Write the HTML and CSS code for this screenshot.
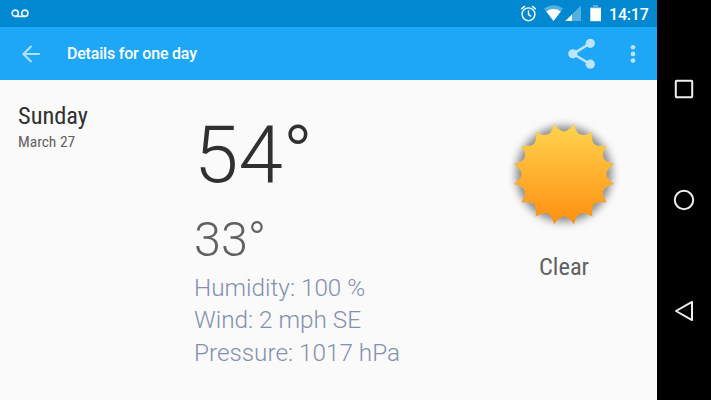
FILE: index.html
```html
<!DOCTYPE html>
<html lang="en">
<head>
<meta charset="utf-8">
<title>Details for one day</title>
<link rel="stylesheet" href="styles.css">
</head>
<body>
<div class="device">
  <div class="app">
    <div class="status">
      <svg class="voicemail" width="18" height="9" viewBox="0 0 18 9" fill="none" stroke="#e4f3fb" stroke-width="1.7"><circle cx="4.2" cy="4.2" r="3.1"/><circle cx="13.8" cy="4.2" r="3.1"/><path d="M4 7.4H14"/></svg>
      <svg class="indicators" width="86" height="20" viewBox="0 0 86 20">
        <g fill="none" stroke="#fff" stroke-width="1.4"><circle cx="8.5" cy="11.3" r="6.4"/><path d="M8.5 7.3V11.7L11.2 13.3M1.2 6.1L4.8 3.1M15.8 6.1L12.2 3.1"/></g>
        <path d="M24 5.5Q33.5-1.2 43 5.5L33.5 18Z" fill="#55b0e0"/>
        <path d="M26.3 8.5Q33.5 3.7 40.8 8.5L33.5 18Z" fill="#fff"/>
        <path d="M45.3 18L61 2.4V18Z" fill="#55b0e0"/>
        <path d="M45.3 18L52 11.4V18Z" fill="#fff"/>
        <path d="M73 2H78V4H81V6H70.3V4H73Z" fill="#55b0e0"/>
        <path d="M70.3 5.2H81V18.2H70.3Z" fill="#fff"/>
      </svg>
      <span class="clock">14:17</span>
    </div>
    <header class="toolbar">
      <svg class="back" width="18" height="18" viewBox="0 0 18 18" fill="none" stroke="#b0e0fc" stroke-width="2.1"><path d="M17.8 9H1.5M9.5 .9L1.4 9L9.5 17.1"/></svg>
      <h1 class="title">Details for one day</h1>
      <svg class="share" width="28" height="32" viewBox="0 0 28 32" fill="#bbe4fd"><path d="M22 5.5L5 15.8L22 26" fill="none" stroke="#bbe4fd" stroke-width="2.6"/><circle cx="22.3" cy="5.3" r="4.6"/><circle cx="4.8" cy="15.8" r="4.6"/><circle cx="22.3" cy="26.2" r="4.6"/></svg>
      <svg class="more" width="6" height="20" viewBox="0 0 6 20" fill="#bbe4fd"><circle cx="3" cy="3.2" r="2.3"/><circle cx="3" cy="9.9" r="2.3"/><circle cx="3" cy="16.6" r="2.3"/></svg>
    </header>
    <main class="content">
      <section class="date">
        <div class="day"><span class="condensed">Sunday</span></div>
        <div class="month"><span class="condensed">March 27</span></div>
      </section>
      <section class="readings">
        <div class="high">54°</div>
        <div class="low">33°</div>
        <div class="detail">Humidity: 100 %</div>
        <div class="detail">Wind: 2 mph SE</div>
        <div class="detail">Pressure: 1017 hPa</div>
      </section>
      <section class="weather">
        <svg class="sun" width="130" height="130" viewBox="-65 -65 130 130">
          <defs>
            <linearGradient id="heat" x1="0" y1="0" x2="0" y2="1"><stop offset="0" stop-color="#ffd44e"/><stop offset="1" stop-color="#ff8f10"/></linearGradient>
            <filter id="shade" x="-20%" y="-20%" width="140%" height="140%"><feGaussianBlur stdDeviation="4"/></filter>
          </defs>
          <circle r="48" fill="#000" opacity=".45" filter="url(#shade)"/>
          <path fill="url(#heat)" d="M50.4 10Q32.2 13.3 42.8 28.6Q24.6 24.6 28.6 42.8Q13.3 32.2 10 50.4Q0 34.8 -10 50.4Q-13.3 32.2 -28.6 42.8Q-24.6 24.6 -42.8 28.6Q-32.2 13.3 -50.4 10Q-34.8 0 -50.4 -10Q-32.2 -13.3 -42.8 -28.6Q-24.6 -24.6 -28.6 -42.8Q-13.3 -32.2 -10 -50.4Q0 -34.8 10 -50.4Q13.3 -32.2 28.6 -42.8Q24.6 -24.6 42.8 -28.6Q32.2 -13.3 50.4 -10Q34.8 0 50.4 10Z"/>
        </svg>
        <div class="condition"><span class="condensed">Clear</span></div>
      </section>
    </main>
  </div>
  <nav class="system">
    <svg width="22" height="22" viewBox="0 0 22 22"><rect x="2.8" y="2.8" width="16.4" height="16.4" rx=".6"/></svg>
    <svg width="22" height="22" viewBox="0 0 22 22"><circle cx="11" cy="11" r="9.2"/></svg>
    <svg width="22" height="22" viewBox="0 0 22 22"><path d="M19 1.9V20.1L3 11Z"/></svg>
  </nav>
</div>
</body>
</html>
```
FILE: styles.css
```css
* { box-sizing: border-box; }
body { margin: 0; font-family: Roboto, sans-serif; background: #fafafa; }
.device { display: flex; width: 711px; height: 400px; overflow: hidden; }
.app { width: 657px; flex: none; }
.status { display: flex; height: 27px; background: #0288d1; padding-left: 11px; }
.voicemail { margin-top: 9px; }
.indicators { margin: 3px 0 0 491px; }
.clock { margin-left: 3px; color: #fff; font-size: 16px; font-weight: 500; line-height: 29px; letter-spacing: -.2px; }
.toolbar { display: flex; align-items: center; height: 53px; background: #1fa7f7; padding-left: 22px; }
.title { margin: 0 0 0 27px; width: 501px; color: #fff; font-size: 16px; font-weight: 500; line-height: 20px; letter-spacing: -.2px; }
.share { flex: none; }
.more { margin-left: 34px; flex: none; }
.content { display: flex; height: 320px; padding-left: 18px; color: #616161; }
.date { width: 176px; padding-top: 21px; }
.condensed { display: inline-block; font-stretch: 75%; }
.day { font-size: 24.4px; line-height: 30px; color: #303030; }
.month { font-size: 15.5px; line-height: 22px; }
.readings { width: 305px; padding-top: 28px; font-weight: 300; }
.high { font-size: 80px; line-height: 94px; color: #303030; }
.low { font-size: 48.5px; line-height: 76px; margin-bottom: -6.5px; }
.detail { font-size: 24.3px; line-height: 32.5px; color: #8490ae; }
.weather { width: 130px; padding-top: 28.5px; }
.sun { display: block; }
.condition { margin-top: 12.5px; text-align: center; font-size: 24.5px; line-height: 32px; }
.system { width: 54px; display: flex; flex-direction: column; align-items: center; gap: 89px; padding-top: 78px; background: #000; }
.system svg { fill: none; stroke: #eee; stroke-width: 2; stroke-linejoin: round; }
```
